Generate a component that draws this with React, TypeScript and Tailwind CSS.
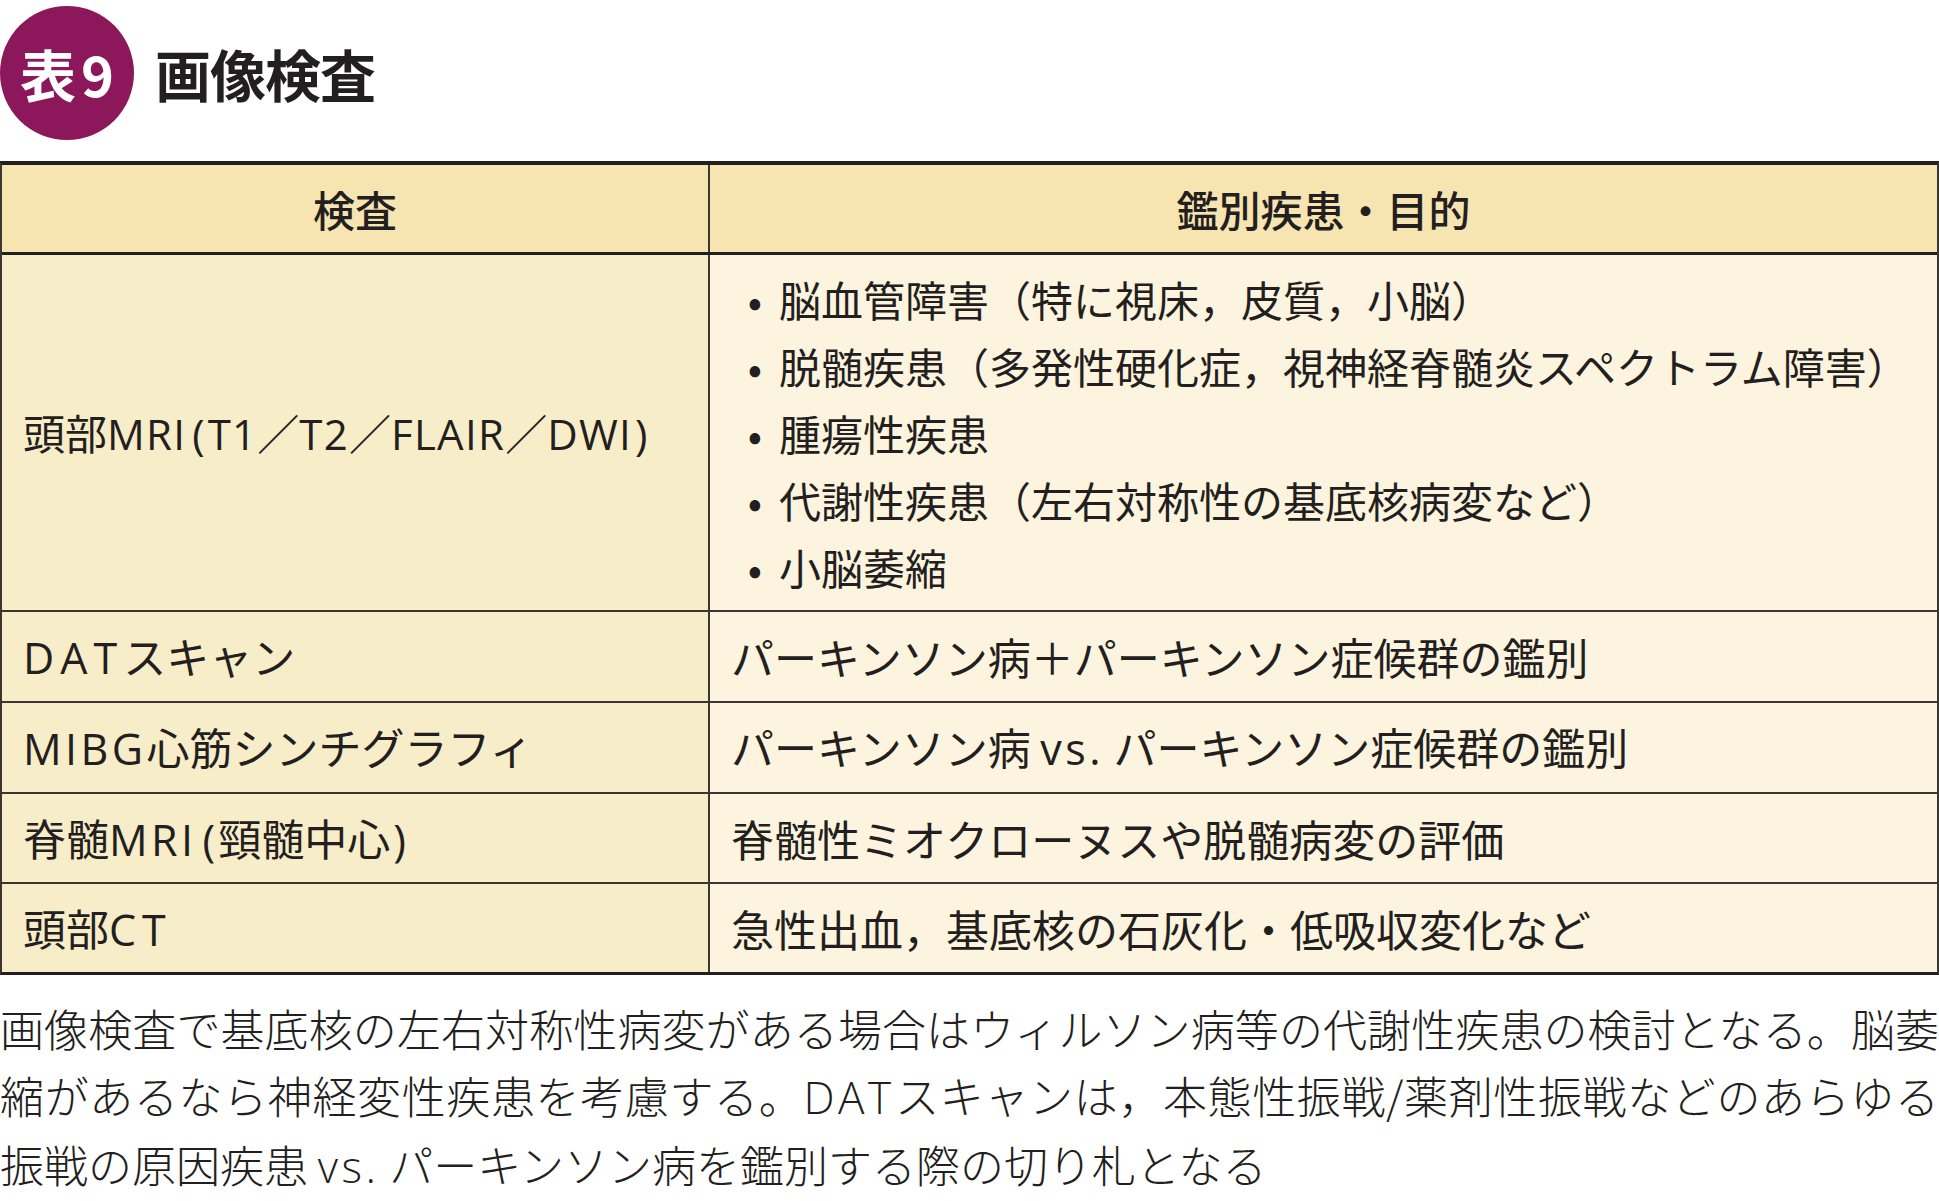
import type { ReactNode } from "react";

const rows: Array<{ exam: ReactNode; purpose: string }> = [
  { exam: <Txt wide>DATスキャン</Txt>, purpose: "パーキンソン病＋パーキンソン症候群の鑑別" },
  { exam: <Txt>MIBG心筋シンチグラフィ</Txt>, purpose: "パーキンソン病 vs. パーキンソン症候群の鑑別" },
  {
    exam: (
      <>
        <Txt>脊髄MRI</Txt>
        <Open />
        頸髄中心
        <Close />
      </>
    ),
    purpose: "脊髄性ミオクローヌスや脱髄病変の評価",
  },
  { exam: <Txt wide>頭部CT</Txt>, purpose: "急性出血，基底核の石灰化・低吸収変化など" },
];

const mriItems = [
  "脳血管障害（特に視床，皮質，小脳）",
  "脱髄疾患（多発性硬化症，視神経脊髄炎スペクトラム障害）",
  "腫瘍性疾患",
  "代謝性疾患（左右対称性の基底核病変など）",
  "小脳萎縮",
];

const rowHeights = ["h-[91px]", "h-[91px]", "h-[90px]", "h-[88px]"];

// latin runs get a wider face, like the print original
function Txt({ children, wide, tight }: { children: string; wide?: boolean; tight?: boolean }) {
  const track = wide ? "tracking-[0.14em]" : tight ? "tracking-[0.03em]" : "tracking-[0.08em]";
  return (
    <>
      {children.split(/([A-Za-z0-9.]+)/).map((part, i) =>
        i % 2 ? (
          <span key={i} className={`font-['Open_Sans',sans-serif] ${track}`}>
            {part}
          </span>
        ) : (
          part
        ),
      )}
    </>
  );
}

function Open() {
  return <span className="ml-[6px] mr-[3px] font-['Open_Sans',sans-serif]">(</span>;
}

function Close() {
  return <span className="ml-[3px] font-['Open_Sans',sans-serif]">)</span>;
}

export default function App() {
  return (
    <div className="w-[1939px] min-h-[1201px] bg-white pt-[6px] font-['Noto_Sans_CJK_JP','Noto_Sans',sans-serif] text-[#231f20]">
      {/* title */}
      <div className="flex items-center gap-[21px]">
        <div className="flex h-[134px] w-[134px] items-center justify-center rounded-full bg-[#8c175b] text-[56px] font-bold leading-none text-white">
          <span>表</span>
          <span className="ml-[5px]">9</span>
        </div>
        <h1 className="text-[56px] font-bold leading-none tracking-[-1px]">画像検査</h1>
      </div>

      {/* table */}
      <div className="mt-[21px] border-x-2 border-t-4 border-b-[3px] border-x-[#3a3631] border-t-[#231f20] border-b-[#231f20] text-[42px] leading-none">
        <div className="flex h-[90px] border-b-[3px] border-[#231f20] bg-[#f6e5b1] font-medium">
          <div className="flex w-[708px] items-center justify-center border-r-2 border-[#3a3631]">検査</div>
          <div className="flex flex-1 items-center justify-center">鑑別疾患・目的</div>
        </div>

        <div className="flex h-[357px] border-b-2 border-[#3a3631]">
          <div className="flex w-[708px] items-center whitespace-nowrap border-r-2 border-[#3a3631] bg-[#f8edc9] pl-[21px]">
            <span>
              <Txt tight>頭部MRI</Txt>
              <Open />
              <Txt tight>T1</Txt>／<Txt tight>T2</Txt>／<Txt tight>FLAIR</Txt>／<Txt tight>DWI</Txt>
              <Close />
            </span>
          </div>
          <ul className="flex flex-1 flex-col justify-center whitespace-nowrap bg-[#fcf4de] pl-[21px]">
            {mriItems.map((item) => (
              <li key={item} className="flex h-[67px] items-center">
                <span className="w-[48px] text-center">•</span>
                <span>{item}</span>
              </li>
            ))}
          </ul>
        </div>

        {rows.map((row, i) => (
          <div
            key={row.purpose}
            className={`flex ${rowHeights[i]} whitespace-nowrap text-[43px] ${i < rows.length - 1 ? "border-b-2 border-[#3a3631]" : ""}`}
          >
            <div className="flex w-[708px] items-center border-r-2 border-[#3a3631] bg-[#f8edc9] pl-[21px]">
              <span>{row.exam}</span>
            </div>
            <div className="flex flex-1 items-center bg-[#fcf4de] pl-[21px]">
              <span>
                <Txt>{row.purpose}</Txt>
              </span>
            </div>
          </div>
        ))}
      </div>

      {/* caption */}
      <div className="mt-[20px] text-[44px] font-light leading-[67px]">
        <p className="text-justify [text-align-last:justify]">
          画像検査で基底核の左右対称性病変がある場合はウィルソン病等の代謝性疾患の検討となる。脳萎
        </p>
        <p className="text-justify [text-align-last:justify]">
          縮があるなら神経変性疾患を考慮する。<Txt>DAT</Txt>スキャンは，本態性振戦/薬剤性振戦などのあらゆる
        </p>
        <p>
          振戦の原因疾患 <Txt>vs.</Txt> パーキンソン病を鑑別する際の切り札となる
        </p>
      </div>
    </div>
  );
}
